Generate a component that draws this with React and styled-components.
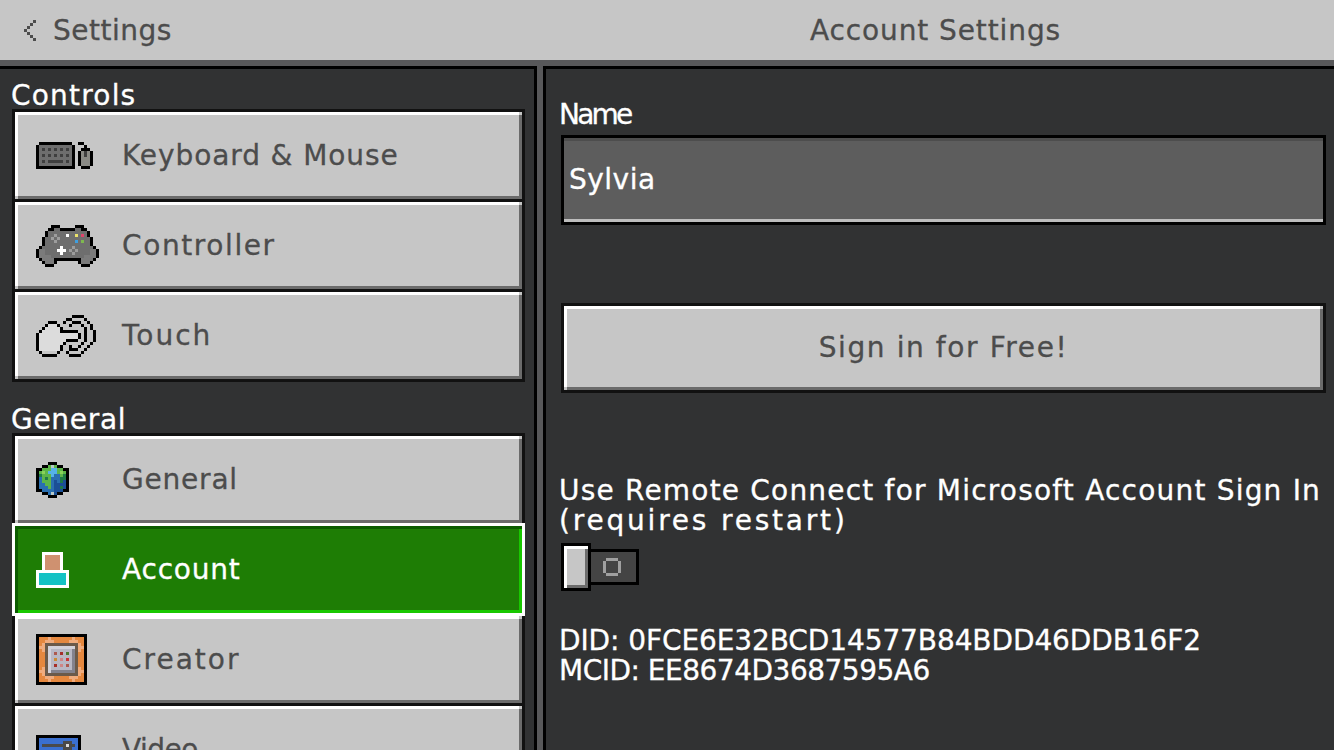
import React from "react";
import styled, { createGlobalStyle, css } from "styled-components";

const Global = createGlobalStyle`
  html, body { margin: 0; padding: 0; background: #313233; }
  * { box-sizing: border-box; }
`;

const Page = styled.div`
  width: 1334px;
  height: 750px;
  overflow: hidden;
  display: flex;
  flex-direction: column;
  background: #313233;
  color: #fff;
  font-family: "DejaVu Sans", "Noto Sans", sans-serif;
  font-size: 28px;
  line-height: 30px;
  -webkit-text-stroke: 0.3px currentColor;
`;

const Text = styled.span`
  display: block;
  white-space: nowrap;
  letter-spacing: ${(p) => p.$track || 0}px;
`;

const Header = styled.header`
  flex: none;
  height: 66px;
  padding-top: 1px;
  display: flex;
  background: #c6c6c6;
  border-bottom: 6px solid #58585a;
  color: #4c4c4c;
`;
const BackLink = styled.div`
  width: 546px;
  display: flex;
  align-items: center;
  gap: 17px;
  padding-left: 24px;
`;
const HeaderTitle = styled.div`
  flex: 1;
  display: flex;
  align-items: center;
  justify-content: center;
  padding-right: 9px;
`;

const Body = styled.div`
  flex: 1;
  min-height: 0;
  display: flex;
  background: #58585a;
`;
const Sidebar = styled.aside`
  width: 537px;
  border-top: 3px solid #000;
  border-right: 3px solid #000;
  background: #313233;
  padding-left: 12px;
`;
const GroupLabel = styled.div`
  height: ${(p) => p.$height}px;
  margin-left: -1px;
  line-height: 26px;
  display: flex;
  align-items: flex-end;
`;
const ButtonList = styled.div`
  width: 513px;
  display: flex;
  flex-direction: column;
  gap: 3px;
  padding: 3px;
  background: #111;
`;

const corners = css`
  &::before, &::after {
    content: "";
    position: absolute;
    width: 3px;
    height: 3px;
    background: #c6c6c6;
  }
  &::before { top: 0; right: 0; }
  &::after { bottom: 0; left: 0; }
`;

const MenuButton = styled.div`
  position: relative;
  height: 87px;
  flex: none;
  display: flex;
  align-items: center;
  background: ${(p) => (p.$active ? "#1e7d05" : "#c6c6c6")};
  color: ${(p) => (p.$active ? "#fff" : "#4c4c4c")};
  box-shadow: ${(p) =>
    p.$active
      ? "inset 3px 3px 0 #0b5c00, inset -3px -3px 0 #19c800, 0 0 0 3px #fff"
      : "inset 3px 3px 0 #fff, inset -3px -3px 0 #6b6b6b"};
  z-index: ${(p) => (p.$active ? 1 : 0)};
  ${(p) => !p.$active && corners}
`;
const IconSlot = styled.div`
  width: 107px;
  flex: none;
  padding-left: 21px;
  display: flex;
  align-items: center;
  svg { display: block; }
`;

const Divider = styled.div`
  width: 6px;
  flex: none;
`;
const Main = styled.main`
  flex: 1;
  border-top: 3px solid #000;
  border-left: 3px solid #000;
  background: #313233;
  padding: 31px 8px 0 13px;
`;
const FieldLabel = styled.div`
  height: 35px;
`;
const NameInput = styled.div`
  margin-left: 2px;
  width: 765px;
  height: 90px;
  display: flex;
  align-items: center;
  padding-left: 5px;
  background: #5d5d5d;
  border: 3px solid #000;
  box-shadow: inset 0 3px 0 #4d4d4d, inset 0 -3px 0 #bdbdbd;
`;
const SignInFrame = styled.div`
  margin: 78px 0 0 2px;
  width: 765px;
  height: 90px;
  padding: 3px;
  background: #111;
`;
const SignInButton = styled.div`
  position: relative;
  height: 84px;
  display: flex;
  align-items: center;
  justify-content: center;
  background: #c6c6c6;
  color: #4c4c4c;
  box-shadow: inset 3px 3px 0 #fff, inset -3px -3px 0 #6b6b6b;
  ${corners}
`;
const Description = styled.div`
  margin-top: 83px;
`;
const Toggle = styled.div`
  margin: 7px 0 0 2px;
  display: flex;
  align-items: center;
`;
const Knob = styled.div`
  position: relative;
  width: 30px;
  height: 48px;
  border: 3px solid #000;
  background: #c6c6c6;
  box-shadow: inset 3px 3px 0 #fff, inset -3px -3px 0 #6b6b6b;
`;
const Track = styled.div`
  width: 48px;
  height: 36px;
  border: 3px solid #000;
  border-left: none;
  background: #444;
  display: flex;
  align-items: center;
  justify-content: center;
  padding-right: 3px;
  svg { display: block; }
`;
const IdBlock = styled.div`
  margin-top: 35px;
`;

const Pixels = ({ rows, palette }) => (
  <svg
    width={rows[0].length * 3}
    height={rows.length * 3}
    viewBox={`0 0 ${rows[0].length} ${rows.length}`}
    shapeRendering="crispEdges"
  >
    {rows.flatMap((row, y) =>
      [...row].map((c, x) =>
        palette[c] ? <rect key={`${x}-${y}`} x={x} y={y} width="1" height="1" fill={palette[c]} /> : null
      )
    )}
  </svg>
);

const chevron = ["...K", "..K.", ".K..", "K...", ".K..", "..K.", "...K"];
const keyboard = [
  ".KKKKKKKKKKK..KK...",
  "KgggggggggggK...K..",
  "KgdgdgdgdgdgK..KKK.",
  "KgggggggggggK.KmdmK",
  "KgdgdgdgdgdgK.KmdmK",
  "KgggggggggggK.KmmmK",
  "KgdgdddddgdgK.KmmmK",
  "KgggggggggggK.KmmmK",
  "KKKKKKKKKKKKK..KKK.",
];
const controller = [
  ".....KKK.....KKK.....",
  "....KKggKKKKKggKK....",
  "...KgggggggggggggK...",
  "...KgglgggWggYgRgK...",
  "..KgglglggggggggggK..",
  "..KggglggggggBgGggK..",
  "..KgggggggggggggggK..",
  ".KggggggWggglggggggK.",
  "KmmggggWWWglglggggmmK",
  "KmmgggggWggglgggggmmK",
  "KmmmmgggggggggggmmmmK",
  ".KmmmmKKKKKKKKKmmmmK.",
  "..KmmmK.......KmmmK..",
  "...KKK.........KKK...",
];
const touch = [
  "............KKKK....",
  "..........KK....K...",
  "....KKK..K..KKK..K..",
  "...KhhhK...K...K..K.",
  "..KhhhhhK.......K.K.",
  ".KhhhhhhKKKKKK..K..K",
  "KhhhhhhhhhhhhhK.K..K",
  "KhhhhhhhhhhhhhK.K..K",
  "KhhhhhhhhhKKKK..K..K",
  "KhhhhhhhhK.....K..K.",
  "KhhhhhhhK..K..K..K..",
  "KhhhhhhhK..KKK..K...",
  ".KsssssK..K....K....",
  "..KKKKK....KKKK.....",
];
const globe = [
  "....KKK....",
  "..KKGWGKK..",
  "KKGGGLLGGKK",
  "KGHGLLLGHGK",
  "KgGGGLBBGgK",
  "KBGgGBBBggK",
  "KBGGGBDBgDK",
  "KBBGGBDDDDK",
  "KBBBGBDDgDK",
  "KKBBBBDDDKK",
  "..KKBWDKK..",
  "....KKK....",
];
const account = [
  "..WWWWWWW..",
  "..WSSSSSW..",
  "..WSSSSSW..",
  "..WSSSSSW..",
  "..WSSSSSW..",
  "..WSSSSSW..",
  "WWWWWWWWWWW",
  "WTTTTTTTTTW",
  "WTTTTTTTTTW",
  "WTTTTTTTTTW",
  "WTTTTTTTTTW",
  "WWWWWWWWWWW",
];
const creator = [
  "KKKKKKKKKKKKKKKKK",
  "KoooLoooooooLoooK",
  "KooLLLoooooLLLooK",
  "KoLbbbbbbbbbbbLoK",
  "KLLbhhhhhhhhhbLLK",
  "KoLbhsssssssdbLoK",
  "KoobhsAsBsCsdbooK",
  "KoobhsssssssdbooK",
  "KoobhsEsFsGsdbooK",
  "KoobhsssssssdbooK",
  "KoobhsBsFsAsdbooK",
  "KoLbhsssssssdbLoK",
  "KLLbhddddddddbLLK",
  "KoLbbbbbbbbbbbLoK",
  "KooLLLoooooLLLooK",
  "KoooLoooooooLoooK",
  "KKKKKKKKKKKKKKKKK",
];
const video = [
  "KKKKKKKKKKKKKKK",
  "KBBBBBBBBBBBBBK",
  "KBBBBBBBBdddBBK",
  "KBddddddddWddBK",
  "KBBBBBBBBdddBBK",
  "KBBBdddBBBBBBBK",
  "KBBdddddBBBBBBK",
  "KBBBdddBBBBBBBK",
  "KBBBBBBBBBBBBBK",
  "KKKKKKKKKKKKKKK",
];
const ring = [".OOOO.", "O....O", "O....O", "O....O", "O....O", ".OOOO."];

const mono = { K: "#000", g: "#6e6e6e", d: "#3f3f3f", m: "#8a8a85" };
const pads = {
  K: "#000", g: "#6e6e6e", m: "#7b7b7b", l: "#9d9d9d", W: "#fff",
  Y: "#ebe36a", R: "#e0446c", B: "#3f9fe0", G: "#7fb84f",
};
const hand = { K: "#000", h: "#dcdcdc", s: "#c6c6c6" };
const earth = {
  K: "#000", G: "#5cb548", H: "#8ad25a", g: "#1f7a48", B: "#2a6fb0", D: "#1b4f96", L: "#55b3e8", W: "#b8c8c8",
};
const person = { W: "#fff", S: "#cf9170", T: "#14c2c4" };
const block = {
  K: "#000", o: "#e5883f", L: "#f0ac7e", b: "#6b5a4a", h: "#d3d2da", s: "#b9b8c4", d: "#83828d",
  A: "#ad5a50", B: "#a72f2a", C: "#4e7a2f", E: "#cc8a35", F: "#cf8585", G: "#cc3535",
};
const screen = { K: "#000", B: "#3a6fcf", d: "#4a4a4a", W: "#ddd" };

const items = {
  controls: [
    { label: "Keyboard & Mouse", track: 0.9, art: keyboard, palette: mono },
    { label: "Controller", track: 1.6, art: controller, palette: pads },
    { label: "Touch", track: 2, art: touch, palette: hand },
  ],
  general: [
    { label: "General", track: 0.8, art: globe, palette: earth },
    { label: "Account", track: 0.8, art: account, palette: person, active: true },
    { label: "Creator", track: 2, art: creator, palette: block },
    { label: "Video", track: -0.5, art: video, palette: screen },
  ],
};

const MenuGroup = ({ list }) => (
  <ButtonList>
    {list.map((it) => (
      <MenuButton key={it.label} $active={it.active}>
        <IconSlot>
          <Pixels rows={it.art} palette={it.palette} />
        </IconSlot>
        <Text $track={it.track}>{it.label}</Text>
      </MenuButton>
    ))}
  </ButtonList>
);

export default function App() {
  return (
    <Page>
      <Global />
      <Header>
        <BackLink>
          <Pixels rows={chevron} palette={{ K: "#4c4c4c" }} />
          <Text $track={0.5}>Settings</Text>
        </BackLink>
        <HeaderTitle>
          <Text $track={0.9}>Account Settings</Text>
        </HeaderTitle>
      </Header>
      <Body>
        <Sidebar>
          <GroupLabel $height={40}>
            <Text $track={1.2}>Controls</Text>
          </GroupLabel>
          <MenuGroup list={items.controls} />
          <GroupLabel $height={51}>
            <Text $track={0.7}>General</Text>
          </GroupLabel>
          <MenuGroup list={items.general} />
        </Sidebar>
        <Divider />
        <Main>
          <FieldLabel>
            <Text $track={-2.8}>Name</Text>
          </FieldLabel>
          <NameInput>
            <Text $track={0.5}>Sylvia</Text>
          </NameInput>
          <SignInFrame>
            <SignInButton>
              <Text $track={1.6}>Sign in for Free!</Text>
            </SignInButton>
          </SignInFrame>
          <Description>
            <Text $track={1.2}>Use Remote Connect for Microsoft Account Sign In</Text>
            <Text $track={2.8}>(requires restart)</Text>
          </Description>
          <Toggle>
            <Knob />
            <Track>
              <Pixels rows={ring} palette={{ O: "#a0a0a0" }} />
            </Track>
          </Toggle>
          <IdBlock>
            <Text $track={-0.1}>DID: 0FCE6E32BCD14577B84BDD46DDB16F2</Text>
            <Text $track={-0.5}>MCID: EE8674D3687595A6</Text>
          </IdBlock>
        </Main>
      </Body>
    </Page>
  );
}
